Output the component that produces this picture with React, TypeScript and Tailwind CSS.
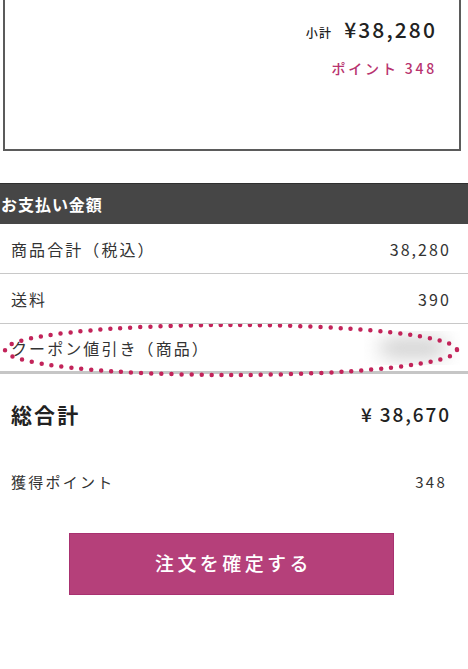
import React from "react";

const font = { fontFamily: '"Noto Sans CJK JP", "Noto Sans", sans-serif' };

const Row = ({ label, value }: { label: string; value: string }) => (
  <div className="flex h-[50px] items-center justify-between border-b border-[#c8c8c8] pl-[11px] pr-[17px] text-[16px] tracking-[0.13em] text-[#333]">
    <span>{label}</span>
    <span>{value}</span>
  </div>
);

const App = () => {
  return (
    <div className="min-h-[669px] w-[468px] overflow-hidden bg-white" style={font}>
      {/* カート小計 */}
      <div className="ml-[3px] flex h-[151px] w-[458px] flex-col items-end border-x-2 border-b-2 border-[#5b5b5b] pr-[22px] pt-[14px]">
        <div className="flex items-baseline gap-[12px] text-[#222]">
          <span className="text-[12px] font-medium tracking-[0.1em]">小計</span>
          <span className="text-[21px] font-medium tracking-[0.1em]">¥38,280</span>
        </div>
        <div className="mt-[12px] text-[14px] font-medium tracking-[0.2em] text-[#b8336f]">
          ポイント 348
        </div>
      </div>

      {/* お支払い金額 */}
      <div className="mt-[32px] flex h-[41px] items-center border-t border-[#2f2f2f] bg-[#464646] pl-[1px] text-[16px] font-bold tracking-[0.06em] text-white">
        お支払い金額
      </div>

      <Row label="商品合計（税込）" value="38,280" />
      <Row label="送料" value="390" />

      <div className="relative">
        <div className="flex h-[50px] items-center justify-between border-b-[3px] border-[#c6c6c6] pl-[11px] pr-[8px] text-[16px] tracking-[0.13em] text-[#333]">
          <span>クーポン値引き（商品）</span>
          <div className="h-[34px] w-[96px] overflow-hidden">
            <div className="ml-[16px] mt-[9px] h-[16px] w-[66px] rounded-full bg-[#c4c4c4] blur-[10px]" />
          </div>
        </div>
        <svg className="pointer-events-none absolute left-0 top-0" width="468" height="56" viewBox="0 0 468 56">
          <ellipse
            cx="231"
            cy="26"
            rx="226"
            ry="25"
            fill="none"
            stroke="#c2245a"
            strokeWidth="4.5"
            strokeLinecap="round"
            strokeDasharray="0 10"
          />
        </svg>
      </div>

      {/* 総合計 */}
      <div className="flex h-[78px] items-center justify-between pl-[11px] pr-[17px] pt-[3px] text-[#222]">
        <span className="text-[21px] font-bold tracking-[0.1em]">総合計</span>
        <span className="text-[19px] font-medium tracking-[0.1em]">¥ 38,670</span>
      </div>

      <div className="mt-[19px] flex items-center justify-between pl-[11px] pr-[21px] text-[15px] tracking-[0.15em] text-[#333]">
        <span>獲得ポイント</span>
        <span>348</span>
      </div>

      <div className="mt-[39px] flex justify-center pr-[5px]">
        <button className="flex h-[62px] w-[325px] items-center justify-center border border-[#a83170] bg-[#b5407a] pl-[4px] text-[19px] font-medium tracking-[0.18em] text-white">
          注文を確定する
        </button>
      </div>
    </div>
  );
};

export default App;
